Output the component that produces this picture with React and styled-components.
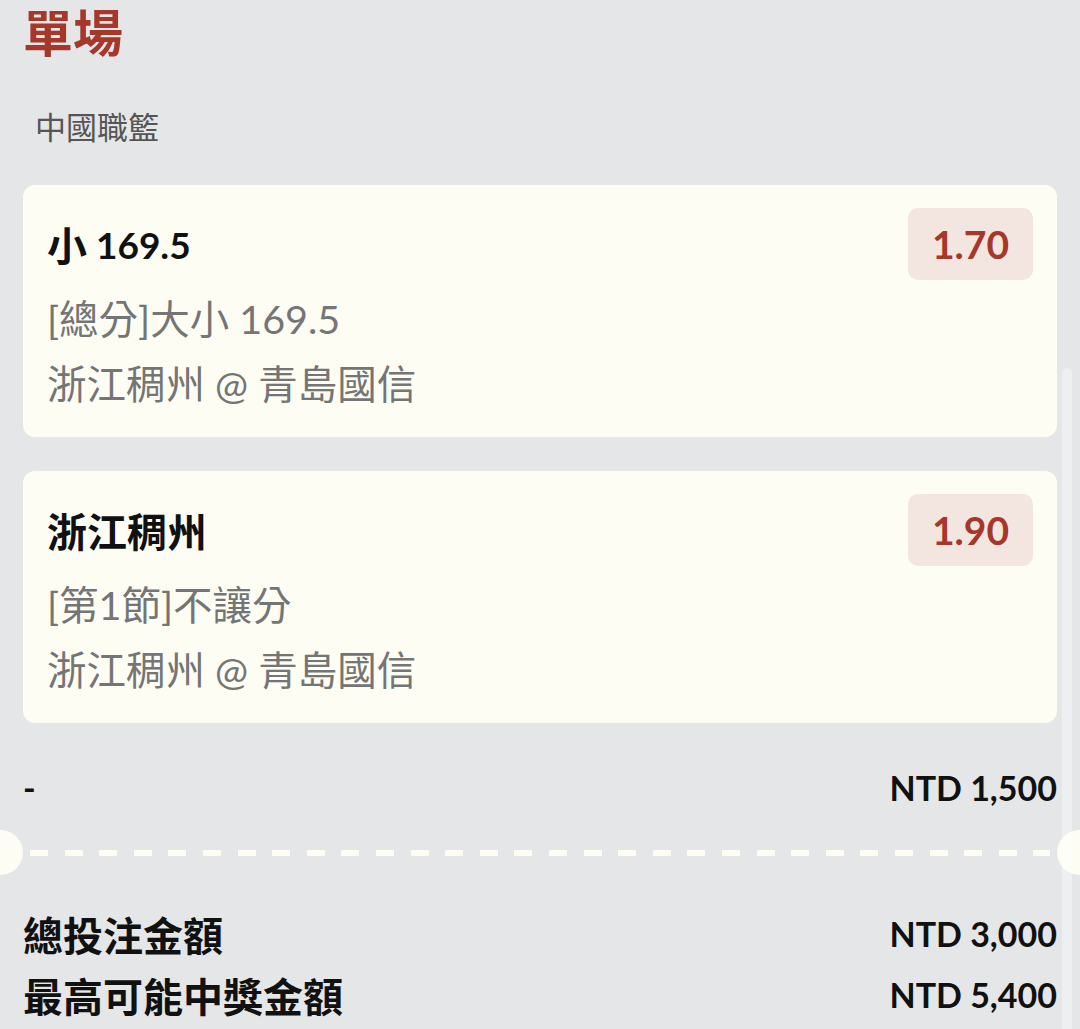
import styled, { createGlobalStyle } from "styled-components";

const GlobalStyle = createGlobalStyle`
  html, body {
    margin: 0;
    padding: 0;
    background: #e5e6e8;
  }
  body {
    font-family: Lato, "Noto Sans CJK TC", sans-serif;
    color: #111;
  }
`;

const Page = styled.div`
  position: relative;
  width: 1080px;
  height: 1029px;
  overflow: hidden;
  background: #e5e6e8;
`;

const Inner = styled.div`
  padding: 0 23px;
`;

const Heading = styled.h1`
  margin: 0;
  font-family: "Noto Sans CJK TC", sans-serif;
  font-size: 50px;
  line-height: 60px;
  font-weight: 700;
  color: #a6372b;
`;

const League = styled.div`
  margin: 46px 0 39px 12px;
  font-family: "Noto Sans CJK TC", sans-serif;
  font-size: 31px;
  line-height: 40px;
  color: #555;
`;

const CardList = styled.div`
  display: flex;
  flex-direction: column;
  gap: 34px;
`;

const Card = styled.div`
  display: flex;
  align-items: flex-start;
  height: 252px;
  box-sizing: border-box;
  padding: 23px 24px 0 24px;
  background: #fdfdf4;
  border-radius: 12px;
`;

const Info = styled.div`
  flex: 1;
  display: flex;
  flex-direction: column;
`;

const Pick = styled.div`
  height: 72px;
  display: flex;
  align-items: center;
  font-size: 37px;
  font-weight: 700;
  color: #111;
  white-space: pre;
`;

const Zh = styled.span`
  font-family: "Noto Sans CJK TC", sans-serif;
  font-size: 1.08em;
`;

const Detail = styled.div`
  height: 65px;
  display: flex;
  align-items: center;
  font-size: 39.5px;
  color: #757575;
  white-space: pre;
  margin-top: ${(p) => (p.$first ? "4px" : "0")};
`;

const Odds = styled.div`
  width: 125px;
  height: 72px;
  display: flex;
  align-items: center;
  justify-content: center;
  background: #f3e6e0;
  border-radius: 10px;
  font-size: 39px;
  font-weight: 700;
  color: #a6372b;
`;

const Row = styled.div`
  display: flex;
  justify-content: space-between;
  align-items: center;
  height: ${(p) => p.$h || "61px"};
  font-weight: 700;
  color: #111;
`;

const Label = styled.span`
  font-family: "Noto Sans CJK TC", sans-serif;
  font-size: 40px;
`;

const Amount = styled.span`
  font-size: 34px;
`;

const StakeRow = styled(Row)`
  margin-top: 39px;
`;

const Divider = styled.div`
  display: flex;
  align-items: center;
  height: 45px;
  margin: 18px 0 28px;
`;

const Notch = styled.div`
  width: 23px;
  height: 45px;
  background: #fdfdf4;
  border-radius: ${(p) => (p.$side === "left" ? "0 23px 23px 0" : "23px 0 0 23px")};
`;

const Dashes = styled.div`
  flex: 1;
  height: 6px;
  margin: 0 7px;
  background: repeating-linear-gradient(
    to right,
    #fdfdf4 0 18px,
    transparent 18px 34.6px
  );
`;

const Summary = styled.div`
  padding: 0 23px;
`;

const ScrollThumb = styled.div`
  position: absolute;
  top: 368px;
  right: 8px;
  width: 10px;
  height: 700px;
  border-radius: 5px;
  background: rgba(255, 255, 255, 0.35);
`;

const bets = [
  {
    pick: (
      <>
        <Zh>小</Zh> 169.5
      </>
    ),
    market: "[總分]大小 169.5",
    odds: "1.70",
  },
  {
    pick: <Zh>浙江稠州</Zh>,
    market: "[第1節]不讓分",
    odds: "1.90",
  },
];

const App = () => {
  return (
    <Page>
      <GlobalStyle />
      <Inner>
        <Heading>單場</Heading>
        <League>中國職籃</League>
        <CardList>
          {bets.map((b) => (
            <Card key={b.odds}>
              <Info>
                <Pick>{b.pick}</Pick>
                <Detail $first>{b.market}</Detail>
                <Detail>浙江稠州 @ 青島國信</Detail>
              </Info>
              <Odds>{b.odds}</Odds>
            </Card>
          ))}
        </CardList>
        <StakeRow $h="50px">
          <Amount>-</Amount>
          <Amount>NTD 1,500</Amount>
        </StakeRow>
      </Inner>
      <Divider>
        <Notch $side="left" />
        <Dashes />
        <Notch $side="right" />
      </Divider>
      <Summary>
        <Row>
          <Label>總投注金額</Label>
          <Amount>NTD 3,000</Amount>
        </Row>
        <Row>
          <Label>最高可能中獎金額</Label>
          <Amount>NTD 5,400</Amount>
        </Row>
      </Summary>
      <ScrollThumb />
    </Page>
  );
};

export default App;
